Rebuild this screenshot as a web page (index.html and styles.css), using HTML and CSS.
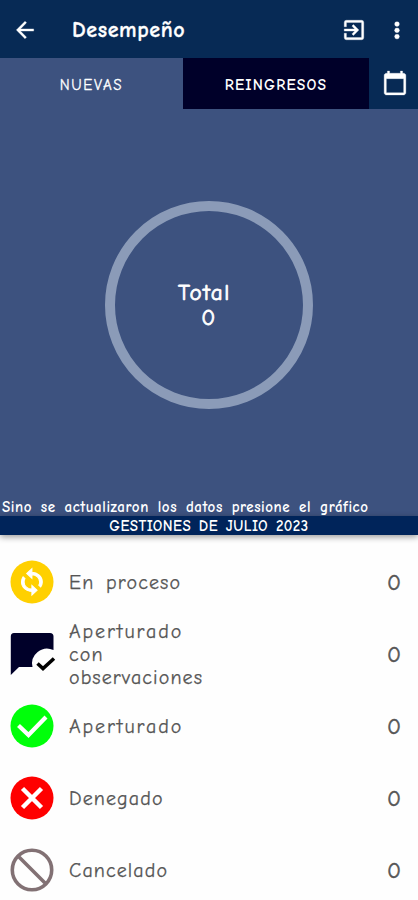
FILE: index.html
```html
<!DOCTYPE html>
<html lang="es">
<head>
  <meta charset="UTF-8" />
  <meta name="viewport" content="width=device-width, initial-scale=1.0"/>
  <title>Desempeño</title>
  <link rel="stylesheet" href="styles.css">
</head>
<body>

<header class="topbar">
  <svg class="icon" viewBox="0 0 24 24"><path d="M20 11H7.83l5.59-5.59L12 4l-8 8 8 8 1.41-1.41L7.83 13H20z"/></svg>
  <h1>Desempeño</h1>
  <svg class="icon exit" viewBox="0 0 24 24"><path d="M10.09 15.59L11.5 17l5-5-5-5-1.41 1.41L12.67 11H3v2h9.67zM19 3H5a2 2 0 0 0-2 2v4h2V5h14v14H5v-4H3v4a2 2 0 0 0 2 2h14a2 2 0 0 0 2-2V5a2 2 0 0 0-2-2z"/></svg>
  <svg class="icon" viewBox="0 0 24 24"><circle cx="12" cy="6.500" r="2.200"/><circle cx="12" cy="12.300" r="2.200"/><circle cx="12" cy="18.100" r="2.200"/></svg>
</header>

<nav class="tabs">
  <div class="tab active">NUEVAS</div>
  <div class="tab">REINGRESOS</div>
  <div class="calendar">
    <svg class="icon" viewBox="0 0 24 24"><path d="M20 3h-1V1h-2v2H7V1H5v2H4c-1.1 0-2 .9-2 2v16c0 1.1.9 2 2 2h16c1.1 0 2-.9 2-2V5c0-1.1-.9-2-2-2zm0 18H4V8h16z"/></svg>
  </div>
</nav>

<section class="chart">
  <div class="ring">
    <span class="total">Total</span>
    <span class="amount">0</span>
  </div>
  <p class="hint">Sino se actualizaron los datos presione el gráfico</p>
</section>
<div class="period">GESTIONES DE JULIO 2023</div>

<ul class="list">
  <li>
    <svg class="status" viewBox="0 0 44 44">
      <circle cx="22" cy="22" r="21.500" fill="#ffd000"/>
      <g transform="translate(37.500 7.500) scale(-1.300 1.200)" fill="#fff" stroke="#fff" stroke-width=".8"><path d="M12 6v3l4-4-4-4v3c-4.420 0-8 3.580-8 8 0 1.570.46 3.030 1.240 4.260L6.700 14.800A5.870 5.870 0 0 1 6 12c0-3.310 2.690-6 6-6zm6.760 1.740L17.300 9.200c.44.840.7 1.790.7 2.800 0 3.310-2.690 6-6 6v-3l-4 4 4 4v-3c4.420 0 8-3.580 8-8 0-1.570-.46-3.030-1.240-4.260z"/></g>
    </svg>
    <span class="name process">En proceso</span><span class="count">0</span>
  </li>
  <li>
    <svg class="status observed" viewBox="0 0 46 44">
      <path d="M4 1h36q3.500 0 3.500 3.500V18a15 15 0 0 0-21 17H9L.8 43V4.500Q.8 1 4 1z" fill="#000029"/>
      <path d="M27.500 31.500l5.500 5L44 26.500" fill="none" stroke="#000" stroke-width="3.600"/>
    </svg>
    <span class="name"><span class="opened">Aperturado</span> con observaciones</span><span class="count">0</span>
  </li>
  <li>
    <svg class="status" viewBox="0 0 44 44">
      <circle cx="22" cy="22" r="21.500" fill="#00ff0a"/>
      <path d="M8.500 21.500l10 9.500L36 13" fill="none" stroke="#fff" stroke-width="4.200"/>
    </svg>
    <span class="name opened">Aperturado</span><span class="count">0</span>
  </li>
  <li>
    <svg class="status" viewBox="0 0 44 44">
      <circle cx="22" cy="22" r="21.500" fill="#f00"/>
      <path d="M12.500 12.500l19 19m0-19l-19 19" stroke="#fff" stroke-width="4.500"/>
    </svg>
    <span class="name">Denegado</span><span class="count">0</span>
  </li>
  <li>
    <svg class="status" viewBox="0 0 44 44">
      <path d="M22 2.300a19.700 19.700 0 1 0 0 39.400a19.700 19.700 0 1 0 0-39.400zM8 8l28 28" fill="none" stroke="#827174" stroke-width="3.600"/>
    </svg>
    <span class="name">Cancelado</span><span class="count">0</span>
  </li>
</ul>

</body>
</html>
```
FILE: styles.css
```css
* { box-sizing: border-box; }
body { margin: 0; height: 900px; overflow: hidden; background: #fefefe; font-family: "Comic Neue", "Comic Sans MS", Lato, sans-serif; }
.icon { width: 26px; height: 26px; fill: #fff; stroke: #fff; stroke-width: 0.3px; flex: none; }
.topbar { display: flex; align-items: center; height: 58px; padding: 2px 8px 0 12px; background: #072a55; color: #fff; }
.topbar h1 { flex: 1; margin: 0 0 0 34px; font-size: 22px; line-height: 28px; letter-spacing: 0.6px; -webkit-text-stroke: 0.3px #fff; }
.exit { margin-right: 17px; }
.tabs { display: flex; height: 51px; background: #072a55; color: #fff; }
.tab { width: 186px; display: flex; align-items: center; justify-content: center; padding-top: 2px; background: #000029; font-size: 15.5px; font-weight: bold; letter-spacing: 1.2px; }
.tab.active { width: 183px; background: #3d527f; font-size: 15px; font-weight: normal; letter-spacing: 1.7px; -webkit-text-stroke: 0.3px #fff; }
.calendar { flex: 1; display: flex; align-items: center; justify-content: center; padding: 0 0 1px 2px; }
.chart { display: flex; flex-direction: column; align-items: center; height: 407px; padding-top: 92px; background: #3d527f; color: #fff; }
.ring { display: flex; flex-direction: column; align-items: center; width: 208px; height: 208px; padding-top: 69px; border: 10px solid #8b9bb8; border-radius: 50%; font-size: 23px; line-height: 25px; letter-spacing: 1.7px; -webkit-text-stroke: 0.8px #fff; }
.total { margin-right: 9px; }
.hint { align-self: stretch; margin: auto 0 0; padding-left: 2px; font-size: 15px; line-height: 18px; font-weight: bold; letter-spacing: 0.55px; word-spacing: 3px; white-space: nowrap; }
.period { height: 19px; background: #00245a; color: #fff; font-size: 15px; line-height: 20px; font-weight: bold; text-align: center; letter-spacing: 0.45px; word-spacing: 2px; box-shadow: 0 2px 6px rgba(0,0,0,0.4); }
.list { list-style: none; margin: 0; padding: 11px 17px 0 10px; color: #555; -webkit-text-stroke: 0.25px #555; }
.list li { display: flex; align-items: center; height: 72px; }
.status { width: 44px; height: 44px; flex: none; }
.observed { width: 46px; margin-right: -2px; }
.name { width: 140px; margin-left: 15px; font-size: 20px; line-height: 23px; letter-spacing: 1.1px; }
.process { word-spacing: 4px; }
.opened { letter-spacing: 1.9px; }
.count { margin-left: auto; font-size: 23px; -webkit-text-stroke: 0.5px #555; }
```
